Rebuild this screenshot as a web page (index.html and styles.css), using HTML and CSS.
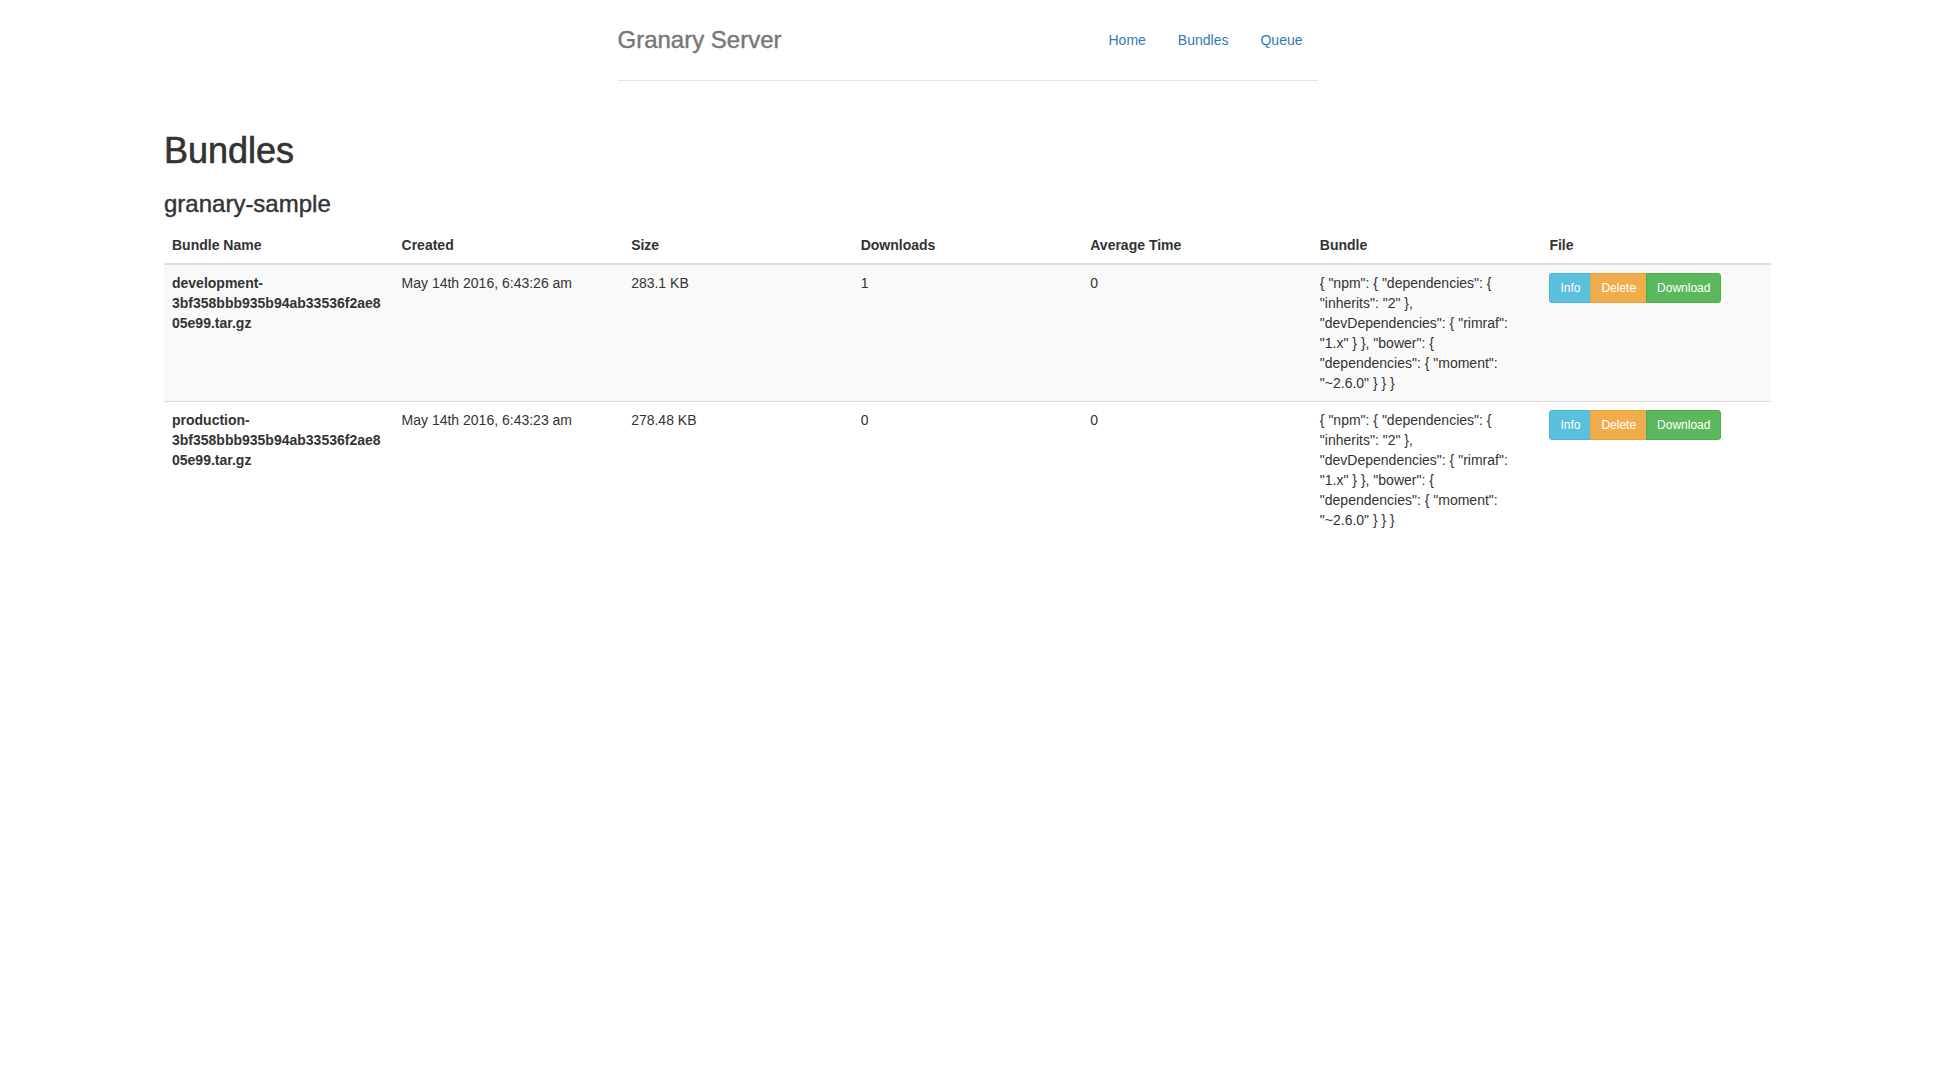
FILE: index.html
```html
<!DOCTYPE html>
<html lang="en">
<head>
<meta charset="utf-8">
<title>Granary Server</title>
<link rel="stylesheet" href="styles.css">
</head>
<body>
<div class="container">
  <div class="header">
    <nav>
      <ul class="nav-pills">
        <li><a href="#">Home</a></li>
        <li><a href="#">Bundles</a></li>
        <li><a href="#">Queue</a></li>
      </ul>
    </nav>
    <h3 class="brand">Granary Server</h3>
  </div>
</div>
<div class="content">
  <h1 class="page-title">Bundles</h1>
  <h3 class="section-title">granary-sample</h3>
  <table class="bundles">
    <thead>
      <tr>
        <th>Bundle Name</th>
        <th>Created</th>
        <th>Size</th>
        <th>Downloads</th>
        <th>Average Time</th>
        <th>Bundle</th>
        <th>File</th>
      </tr>
    </thead>
    <tbody>
      <tr class="odd">
        <td class="name">development-3bf358bbb935b94ab33536f2ae805e99.tar.gz</td>
        <td>May 14th 2016, 6:43:26 am</td>
        <td>283.1 KB</td>
        <td>1</td>
        <td>0</td>
        <td>{ "npm": { "dependencies": { "inherits": "2" }, "devDependencies": { "rimraf": "1.x" } }, "bower": { "dependencies": { "moment": "~2.6.0" } } }</td>
        <td>
          <div class="btn-group">
            <a href="#" class="btn btn-info">Info</a><a href="#" class="btn btn-warning">Delete</a><a href="#" class="btn btn-success">Download</a>
          </div>
        </td>
      </tr>
      <tr>
        <td class="name">production-3bf358bbb935b94ab33536f2ae805e99.tar.gz</td>
        <td>May 14th 2016, 6:43:23 am</td>
        <td>278.48 KB</td>
        <td>0</td>
        <td>0</td>
        <td>{ "npm": { "dependencies": { "inherits": "2" }, "devDependencies": { "rimraf": "1.x" } }, "bower": { "dependencies": { "moment": "~2.6.0" } } }</td>
        <td>
          <div class="btn-group">
            <a href="#" class="btn btn-info">Info</a><a href="#" class="btn btn-warning">Delete</a><a href="#" class="btn btn-success">Download</a>
          </div>
        </td>
      </tr>
    </tbody>
  </table>
</div>
</body>
</html>
```

FILE: styles.css
```css
* {
  box-sizing: border-box;
}

html, body {
  margin: 0;
  background: #fff;
}

body {
  padding-top: 20px;
  font-family: "Liberation Sans", Arial, Helvetica, sans-serif;
  font-size: 14px;
  line-height: 20px;
  color: #333;
}

a {
  color: #337ab7;
  text-decoration: none;
}

.container {
  max-width: 730px;
  margin: 0 auto;
  padding: 0 15px;
}

.header {
  display: flex;
  flex-direction: row-reverse;
  justify-content: space-between;
  align-items: flex-start;
  padding-bottom: 20px;
  border-bottom: 1px solid #e5e5e5;
  margin-bottom: 30px;
}

.brand {
  margin: 0;
  font-size: 24px;
  line-height: 40px;
  font-weight: 500;
  color: #777;
  -webkit-text-stroke: 0.4px #777;
}

.nav-pills {
  display: flex;
  list-style: none;
  margin: 0;
  padding: 0;
}

.nav-pills li + li {
  margin-left: 2px;
}

.nav-pills a {
  display: block;
  padding: 10px 15px;
  border-radius: 4px;
}

.content {
  width: 1607px;
  margin: 0 auto;
}

.page-title {
  margin: 50px 0 10px;
  font-size: 36px;
  line-height: 1.1;
  font-weight: 500;
  -webkit-text-stroke: 0.6px #333;
}

.section-title {
  margin: 20px 0 10px;
  font-size: 24px;
  line-height: 1.1;
  font-weight: 500;
  -webkit-text-stroke: 0.4px #333;
}

.bundles {
  width: 100%;
  table-layout: fixed;
  border-collapse: collapse;
  border-spacing: 0;
  margin-bottom: 20px;
}

.bundles th,
.bundles td {
  padding: 8px;
  line-height: 20px;
  text-align: left;
}

.bundles thead th {
  vertical-align: bottom;
  font-weight: bold;
  border-bottom: 2px solid #ddd;
}

.bundles tbody td {
  vertical-align: top;
  border-top: 1px solid #ddd;
  overflow-wrap: break-word;
}

.bundles tbody tr.odd {
  background: #f9f9f9;
}

.bundles td.name {
  font-weight: bold;
}

.btn-group {
  display: inline-flex;
  vertical-align: middle;
}

.btn {
  display: inline-block;
  padding: 5px 10px;
  font-size: 12px;
  line-height: 1.5;
  color: #fff;
  border: 1px solid transparent;
  white-space: nowrap;
}

.btn + .btn {
  margin-left: -1px;
}

.btn:first-child {
  border-radius: 3px 0 0 3px;
}

.btn:last-child {
  border-radius: 0 3px 3px 0;
}

.btn-info {
  background: #5bc0de;
  border-color: #46b8da;
}

.btn-warning {
  background: #f0ad4e;
  border-color: #eea236;
}

.btn-success {
  background: #5cb85c;
  border-color: #4cae4c;
}
```
